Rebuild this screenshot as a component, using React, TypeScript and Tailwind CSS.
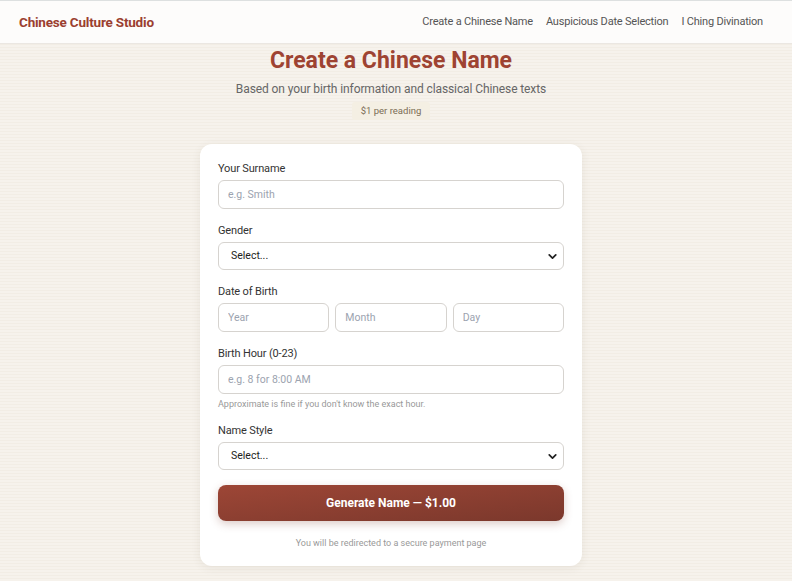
import { ChevronDown } from 'lucide-react';

const navLinks = ['Create a Chinese Name', 'Auspicious Date Selection', 'I Ching Divination'];

function Label({ children }: { children: React.ReactNode }) {
  return <label className="mb-[3px] block text-[11px] leading-[16px] tracking-[-0.15px] text-[#333]">{children}</label>;
}

function TextInput({ placeholder }: { placeholder: string }) {
  return (
    <input
      placeholder={placeholder}
      className="h-[29px] w-full rounded-[6px] border border-[#d6d3cf] bg-white px-[9px] text-[10.5px] text-[#333] placeholder:text-[#9ca3af] outline-none"
    />
  );
}

function SelectBox() {
  return (
    <div className="relative">
      <select className="h-[28px] w-full appearance-none rounded-[6px] border border-[#d6d3cf] bg-white px-[12px] text-[10.5px] text-[#222] outline-none">
        <option>Select...</option>
      </select>
      <ChevronDown className="pointer-events-none absolute right-[5px] top-[8px] h-[13px] w-[13px] text-[#222]" strokeWidth={3.2} />
    </div>
  );
}

export default function App() {
  return (
    <div className="min-h-[581px] border-t border-[#dde0e0] bg-[repeating-linear-gradient(0deg,#f6f2ec_0px,#f6f2ec_2px,#f2ede5_2px,#f2ede5_3px)] font-['Segoe_UI',Roboto,sans-serif]">
      <header className="flex h-[43px] items-center justify-between border-b border-[#ebe7e2] bg-[#fdfcfb] pl-[19px] pr-[29px]">
        <span className="text-[13.5px] font-bold tracking-[-0.2px] text-[#9b3f30]">Chinese Culture Studio</span>
        <nav className="flex gap-[13px] text-[11px] tracking-[-0.2px] text-[#555]">
          {navLinks.map((link) => (
            <a key={link} href="#">
              {link}
            </a>
          ))}
        </nav>
      </header>

      <main className="mr-[10px] flex flex-col items-center pt-[1px]">
        <h1 className="text-[23px] font-bold leading-[32px] text-[#9e4332]">Create a Chinese Name</h1>
        <p className="mt-[3px] text-[12px] leading-[18px] tracking-[-0.1px] text-[#666]">Based on your birth information and classical Chinese texts</p>
        <span className="mt-[4px] rounded-[3px] bg-[#f4efe3] px-[9px] py-[3px] text-[9.5px] leading-[12px] text-[#7a6d55]">$1 per reading</span>

        <form className="mt-[24px] w-[382px] rounded-[12px] bg-white px-[18px] pt-[17px] pb-[17px] shadow-[0_2px_10px_rgba(80,60,40,0.08)]">
          <div className="mb-[14px]">
            <Label>Your Surname</Label>
            <TextInput placeholder="e.g. Smith" />
          </div>
          <div className="mb-[14px]">
            <Label>Gender</Label>
            <SelectBox />
          </div>
          <div className="mb-[14px]">
            <Label>Date of Birth</Label>
            <div className="grid grid-cols-3 gap-[6px]">
              <TextInput placeholder="Year" />
              <TextInput placeholder="Month" />
              <TextInput placeholder="Day" />
            </div>
          </div>
          <div className="mb-[13px]">
            <Label>Birth Hour (0-23)</Label>
            <TextInput placeholder="e.g. 8 for 8:00 AM" />
            <p className="mt-[4px] text-[9px] leading-[12px] text-[#999]">Approximate is fine if you don't know the exact hour.</p>
          </div>
          <div className="mb-[15px]">
            <Label>Name Style</Label>
            <SelectBox />
          </div>
          <button
            type="button"
            className="h-[36px] w-full rounded-[8px] bg-gradient-to-br from-[#9d4636] to-[#7b382c] text-[12px] font-bold text-white shadow-[0_3px_8px_rgba(120,55,40,0.25)]"
          >
            Generate Name — $1.00
          </button>
          <p className="mt-[16px] text-center text-[9px] leading-[12px] text-[#999]">You will be redirected to a secure payment page</p>
        </form>
      </main>
    </div>
  );
}
